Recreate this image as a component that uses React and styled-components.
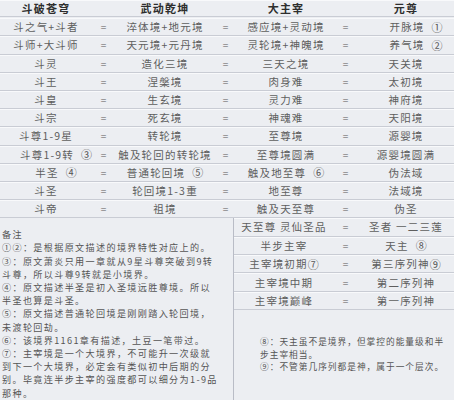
import styled, { createGlobalStyle } from "styled-components";

const GlobalStyle = createGlobalStyle`
  html, body {
    margin: 0;
    padding: 0;
    background: #eceef2;
  }
`;

const COLS = "92px 24px 98px 24px 96px 24px 96px";

const HEAD = ["斗破苍穹", "武动乾坤", "大主宰", "元尊"];

// each row: [text, mark, balanced] per book column
const ROWS = [
  [["斗之气+斗者"], ["淬体境+地元境"], ["感应境+灵动境"], ["开脉境", "①", true]],
  [["斗师+大斗师"], ["天元境+元丹境"], ["灵轮境+神魄境"], ["养气境", "②", true]],
  [["斗灵"], ["造化三境"], ["三天之境"], ["天关境"]],
  [["斗王"], ["涅槃境"], ["肉身难"], ["太初境"]],
  [["斗皇"], ["生玄境"], ["灵力难"], ["神府境"]],
  [["斗宗"], ["死玄境"], ["神魂难"], ["天阳境"]],
  [["斗尊1-9星"], ["转轮境"], ["至尊境"], ["源婴境"]],
  [["斗尊1-9转", "③", true], ["触及轮回的转轮境"], ["至尊境圆满"], ["源婴境圆满"]],
  [["半圣", "④", true], ["普通轮回境", "⑤"], ["触及地至尊", "⑥"], ["伪法域"]],
  [["斗圣"], ["轮回境1-3重"], ["地至尊"], ["法域境"]],
  [["斗帝"], ["祖境"], ["触及天至尊"], ["伪圣"]],
];

const SUB_ROWS = [
  [["天至尊 灵仙圣品"], ["圣者 一二三莲"]],
  [["半步主宰"], ["天主", "⑧"]],
  [["主宰境初期", "⑦", false, true], ["第三序列神", "⑨", false, true]],
  [["主宰境中期"], ["第二序列神"]],
  [["主宰境巅峰"], ["第一序列神"]],
];

const LEFT_NOTES = [
  ["备注"],
  ["①②：是根据原文描述的境界特性对应上的。"],
  ["③：原文萧炎只用一章就从9星斗尊突破到9转", "斗尊，所以斗尊9转就是小境界。"],
  ["④：原文描述半圣是初入圣境远胜尊境。所以", "半圣也算是斗圣。"],
  ["⑤：原文描述普通轮回境是刚刚踏入轮回境，", "未渡轮回劫。"],
  ["⑥：该境界1161章有描述，土豆一笔带过。"],
  [
    "⑦：主宰境是一个大境界，不可能升一次级就",
    "到下一个大境界，必定会有类似初中后期的分",
    "别。毕竟连半步主宰的强度都可以细分为1-9品",
    "那种。",
  ],
];

const RIGHT_NOTES = [
  ["⑧：天主虽不是境界，但掌控的能量级和半", "步主宰相当。"],
  ["⑨：不管第几序列都是神，属于一个层次。"],
];

const Page = styled.div`
  width: 454px;
  height: 400px;
  overflow: hidden;
  background: #eceef2;
  font-family: "Noto Sans CJK SC", "Noto Sans", sans-serif;
  color: #5e5e5e;
`;

const Table = styled.div`
  display: grid;
  grid-template-columns: ${COLS};
  grid-auto-rows: 18.2px;
`;

const Cell = styled.div`
  display: flex;
  align-items: center;
  justify-content: center;
  white-space: nowrap;
  font-size: ${(p) => (p.$head ? "11px" : "10.5px")};
  font-weight: ${(p) => (p.$head ? 700 : 400)};
  color: ${(p) => (p.$head ? "#2e2e2e" : "#5e5e5e")};
  letter-spacing: 1.2px;
  border-bottom: 1px solid #c9ccd4;
  box-shadow: inset 0 1px 0 #f8f9fb;
  box-sizing: border-box;
  padding-left: ${(p) => (p.$balanced ? "20px" : "0")};
`;

const HeadCell = styled(Cell)`
  height: 17px;
`;

const Mark = styled.span`
  margin-left: ${(p) => (p.$tight ? "0" : "7px")};
  font-size: 11px;
  letter-spacing: 0;
  color: #555;
`;

const Eq = styled(Cell)`
  font-size: 10px;
  color: #8a8a8a;
`;

const Bottom = styled.div`
  display: grid;
  grid-template-columns: 233px 221px;
  height: 182px;
`;

const LeftNotes = styled.div`
  padding: 10px 0 0 2px;
`;

const RightSide = styled.div`
  border-left: 1px solid #b9bcc6;
  display: flex;
  flex-direction: column;
`;

const SubTable = styled.div`
  display: grid;
  grid-template-columns: 100px 24px 96px;
  grid-auto-rows: 18.4px;
`;

const RightNotes = styled.div`
  padding: 26px 0 0 26px;
`;

const Note = styled.p`
  margin: 0;
  font-size: ${(p) => (p.$small ? "8.7px" : "9.1px")};
  line-height: ${(p) => (p.$small ? "12.6px" : "13.2px")};
  letter-spacing: ${(p) => (p.$small ? "1px" : "1.35px")};
  white-space: nowrap;
  color: #555;
`;

function Entry({ data }) {
  const [text, mark, balanced, tight] = data;
  return (
    <Cell $balanced={balanced}>
      {text}
      {mark && <Mark $tight={tight}>{mark}</Mark>}
    </Cell>
  );
}

function NoteBlock({ lines, small }) {
  return (
    <Note $small={small}>
      {lines.map((l, i) => (
        <span key={i}>
          {l}
          {i < lines.length - 1 && <br />}
        </span>
      ))}
    </Note>
  );
}

export default function App() {
  return (
    <Page>
      <GlobalStyle />
      <Table>
        {HEAD.map((h, i) => (
          <>
            <HeadCell key={h} $head>
              {h}
            </HeadCell>
            {i < HEAD.length - 1 && <HeadCell key={h + "eq"} />}
          </>
        ))}
        {ROWS.map((row, r) =>
          row.map((c, i) => (
            <>
              <Entry key={r + "-" + i} data={c} />
              {i < row.length - 1 && <Eq key={r + "eq" + i}>=</Eq>}
            </>
          ))
        )}
      </Table>
      <Bottom>
        <LeftNotes>
          {LEFT_NOTES.map((n, i) => (
            <NoteBlock key={i} lines={n} />
          ))}
        </LeftNotes>
        <RightSide>
          <SubTable>
            {SUB_ROWS.map((row, r) => (
              <>
                <Entry key={"s" + r + "a"} data={row[0]} />
                <Eq key={"s" + r + "eq"}>=</Eq>
                <Entry key={"s" + r + "b"} data={row[1]} />
              </>
            ))}
          </SubTable>
          <RightNotes>
            {RIGHT_NOTES.map((n, i) => (
              <NoteBlock key={i} lines={n} small />
            ))}
          </RightNotes>
        </RightSide>
      </Bottom>
    </Page>
  );
}
